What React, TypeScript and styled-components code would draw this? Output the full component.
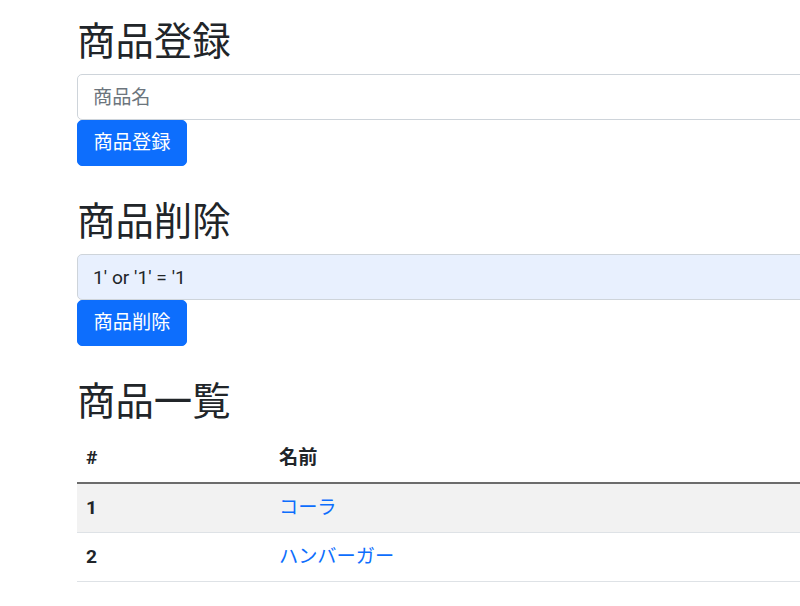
import React from "react";
import styled, { createGlobalStyle } from "styled-components";

const GlobalStyle = createGlobalStyle`
  html, body {
    margin: 0;
    overflow: hidden;
  }
  body {
    font-family: Roboto, "Noto Sans CJK JP", "Noto Sans", sans-serif;
    color: #212529;
    background: #fff;
    font-size: 19.2px;
  }
`;

const Container = styled.main`
  width: 1100px;
  padding: 18px 0 0 77px;
`;

const Section = styled.section`
  margin-bottom: 32px;
`;

const Title = styled.h1`
  font-size: 38.4px;
  line-height: 48px;
  font-weight: 400;
  margin: 0 0 8px;
  color: #212529;
`;

const Input = styled.input<{ $filled?: boolean }>`
  display: block;
  box-sizing: border-box;
  width: 100%;
  height: 46px;
  font-family: inherit;
  font-size: 19.2px;
  line-height: 28px;
  padding: 8px 15px;
  color: #212529;
  background: ${(p) => (p.$filled ? "#e8f0fe" : "#fff")};
  border: 1px solid #ced4da;
  border-radius: 5px;
  outline: none;
  &::placeholder {
    color: #6c757d;
  }
`;

const Button = styled.button`
  display: inline-block;
  box-sizing: border-box;
  height: 46px;
  font-family: inherit;
  font-size: 19.2px;
  line-height: 28px;
  padding: 8px 15.6px;
  color: #fff;
  background: #0d6efd;
  border: 1px solid #0d6efd;
  border-radius: 5px;
  cursor: pointer;
`;

const Table = styled.table`
  width: 100%;
  border-collapse: collapse;
  font-size: 19.2px;
`;

const HeadCell = styled.th<{ $w?: number }>`
  text-align: left;
  font-weight: 700;
  padding: 11px 8px 12px 9px;
  line-height: 25px;
  border-bottom: 2px solid #6c6c6c;
  ${(p) => (p.$w ? `width: ${p.$w}px;` : "")}
`;

const Row = styled.tr<{ $striped?: boolean }>`
  background: ${(p) => (p.$striped ? "#f2f2f2" : "transparent")};
`;

const RowHead = styled.th`
  text-align: left;
  font-weight: 700;
  padding: 12px 8px 12px 9px;
  line-height: 24px;
  border-bottom: 1px solid #dee2e6;
`;

const Cell = styled.td`
  padding: 12px 8px 12px 9px;
  line-height: 24px;
  border-bottom: 1px solid #dee2e6;
`;

const Link = styled.a`
  color: #0d6efd;
  text-decoration: none;
`;

const products = [
  { id: 1, name: "コーラ" },
  { id: 2, name: "ハンバーガー" },
];

export default function App() {
  return (
    <>
      <GlobalStyle />
      <Container>
        <Section>
          <Title>商品登録</Title>
          <Input placeholder="商品名" />
          <Button>商品登録</Button>
        </Section>
        <Section>
          <Title>商品削除</Title>
          <Input $filled defaultValue="1' or '1' = '1" />
          <Button>商品削除</Button>
        </Section>
        <Section>
          <Title>商品一覧</Title>
          <Table>
            <thead>
              <tr>
                <HeadCell $w={176}>#</HeadCell>
                <HeadCell>名前</HeadCell>
              </tr>
            </thead>
            <tbody>
              {products.map((p, i) => (
                <Row key={p.id} $striped={i % 2 === 0}>
                  <RowHead>{p.id}</RowHead>
                  <Cell>
                    <Link href="#">{p.name}</Link>
                  </Cell>
                </Row>
              ))}
            </tbody>
          </Table>
        </Section>
      </Container>
    </>
  );
}
